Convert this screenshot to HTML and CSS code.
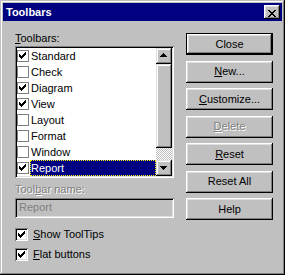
FILE: index.html
```html
<!DOCTYPE html>
<html>
<head>
<meta charset="utf-8">
<link rel="stylesheet" href="styles.css">
</head>
<body>
<div class="window">
  <div class="titlebar">
    <span class="title">Toolbars</span>
    <button class="title-close" aria-label="Close">
      <svg width="8" height="7" viewBox="0 0 8 7" shape-rendering="crispEdges"><path fill="#000" d="M0 0h2v1H0zM6 0h2v1H6zM1 1h2v1H1zM5 1h2v1H5zM2 2h4v1H2zM3 3h2v1H3zM2 4h4v1H2zM1 5h2v1H1zM5 5h2v1H5zM0 6h2v1H0zM6 6h2v1H6z"/></svg>
    </button>
  </div>
  <div class="body">
    <div class="left">
      <div class="label"><u>T</u>oolbars:</div>
      <div class="listbox">
        <ul class="items">
          <li class="item"><span class="cb-flat"><svg class="tick" width="7" height="7" viewBox="0 0 7 7" shape-rendering="crispEdges"><path d="M0 2h1v3H0zM1 3h1v3H1zM2 4h1v3H2zM3 3h1v3H3zM4 2h1v3H4zM5 1h1v3H5zM6 0h1v3H6z"/></svg></span><span class="item-text">Standard</span></li>
          <li class="item"><span class="cb-flat"></span><span class="item-text">Check</span></li>
          <li class="item"><span class="cb-flat"><svg class="tick" width="7" height="7" viewBox="0 0 7 7" shape-rendering="crispEdges"><path d="M0 2h1v3H0zM1 3h1v3H1zM2 4h1v3H2zM3 3h1v3H3zM4 2h1v3H4zM5 1h1v3H5zM6 0h1v3H6z"/></svg></span><span class="item-text">Diagram</span></li>
          <li class="item"><span class="cb-flat"><svg class="tick" width="7" height="7" viewBox="0 0 7 7" shape-rendering="crispEdges"><path d="M0 2h1v3H0zM1 3h1v3H1zM2 4h1v3H2zM3 3h1v3H3zM4 2h1v3H4zM5 1h1v3H5zM6 0h1v3H6z"/></svg></span><span class="item-text">View</span></li>
          <li class="item"><span class="cb-flat"></span><span class="item-text">Layout</span></li>
          <li class="item"><span class="cb-flat"></span><span class="item-text">Format</span></li>
          <li class="item"><span class="cb-flat"></span><span class="item-text">Window</span></li>
          <li class="item"><span class="cb-flat"><svg class="tick" width="7" height="7" viewBox="0 0 7 7" shape-rendering="crispEdges"><path d="M0 2h1v3H0zM1 3h1v3H1zM2 4h1v3H2zM3 3h1v3H3zM4 2h1v3H4zM5 1h1v3H5zM6 0h1v3H6z"/></svg></span><span class="item-text selected">Report</span></li>
        </ul>
        <div class="scrollbar">
          <div class="sb-btn sb-up"><svg width="7" height="4" viewBox="0 0 7 4" shape-rendering="crispEdges"><path d="M3 0h1v1H3zM2 1h3v1H2zM1 2h5v1H1zM0 3h7v1H0z"/></svg></div>
          <div class="sb-thumb"></div>
          <div class="sb-track"></div>
          <div class="sb-btn sb-down"><svg width="7" height="4" viewBox="0 0 7 4" shape-rendering="crispEdges"><path d="M0 0h7v1H0zM1 1h5v1H1zM2 2h3v1H2zM3 3h1v1H3z"/></svg></div>
        </div>
      </div>
      <div class="label label-name disabled">Tool<u>b</u>ar name:</div>
      <div class="edit">Report</div>
      <div class="checks">
        <div class="check"><span class="cb"><svg class="tick" width="7" height="7" viewBox="0 0 7 7" shape-rendering="crispEdges"><path d="M0 2h1v3H0zM1 3h1v3H1zM2 4h1v3H2zM3 3h1v3H3zM4 2h1v3H4zM5 1h1v3H5zM6 0h1v3H6z"/></svg></span><span><u>S</u>how ToolTips</span></div>
        <div class="check"><span class="cb"><svg class="tick" width="7" height="7" viewBox="0 0 7 7" shape-rendering="crispEdges"><path d="M0 2h1v3H0zM1 3h1v3H1zM2 4h1v3H2zM3 3h1v3H3zM4 2h1v3H4zM5 1h1v3H5zM6 0h1v3H6z"/></svg></span><span><u>F</u>lat buttons</span></div>
      </div>
    </div>
    <div class="buttons">
      <button class="btn btn-default">Close</button>
      <button class="btn"><u>N</u>ew...</button>
      <button class="btn"><u>C</u>ustomize...</button>
      <button class="btn disabled"><u>D</u>elete</button>
      <button class="btn"><u>R</u>eset</button>
      <button class="btn">Reset All</button>
      <button class="btn">Help</button>
    </div>
  </div>
</div>
</body>
</html>
```
FILE: styles.css
```css
* { box-sizing: border-box; }
html, body { margin: 0; padding: 0; }
body {
  font-family: "Liberation Sans", Arial, sans-serif;
  font-size: 11px;
  color: #000;
  background: #c0c0c0;
}
.window {
  width: 285px;
  height: 275px;
  padding: 3px;
  background: #c0c0c0;
  box-shadow: inset -1px -1px #000, inset 1px 1px #c0c0c0, inset -2px -2px #808080, inset 2px 2px #fff;
  display: flex;
  flex-direction: column;
}
.titlebar {
  height: 18px;
  background: #000080;
  display: flex;
  align-items: flex-start;
  justify-content: space-between;
  padding: 2px 2px 0 3px;
}
.title {
  color: #fff;
  font-weight: bold;
  line-height: 14px;
}
.title-close {
  width: 16px;
  height: 14px;
  border: 0;
  margin: 0;
  padding: 3px 0 0 4px;
  background: #c0c0c0;
  box-shadow: inset -1px -1px #000, inset 1px 1px #fff, inset -2px -2px #808080, inset 2px 2px #dfdfdf;
  display: block;
}
.title-close svg { display: block; }
.body {
  display: flex;
  gap: 12px;
  padding: 11px 0 0 12px;
}
.left {
  width: 159px;
  display: flex;
  flex-direction: column;
}
.label {
  line-height: 13px;
  height: 13px;
  white-space: nowrap;
}
.disabled {
  color: #808080;
  text-shadow: 1px 1px 0 #fff;
}
.listbox {
  margin-top: 1px;
  height: 132px;
  padding: 2px;
  background: #fff;
  box-shadow: inset 1px 1px #808080, inset -1px -1px #fff, inset 2px 2px #000, inset -2px -2px #dfdfdf;
  display: flex;
}
.items {
  list-style: none;
  margin: 0;
  padding: 0;
  width: 139px;
}
.item {
  height: 16px;
  display: flex;
  align-items: center;
}
.cb-flat {
  flex: none;
  width: 12px;
  height: 12px;
  border: 1px solid #808080;
  background: #fff;
}
.cb-flat .tick { display: block; margin: 1px 0 0 1px; }
.item-text {
  flex: 1;
  margin-left: 1px;
  height: 16px;
  border: 1px solid transparent;
  padding-top: 1px;
  line-height: 13px;
  white-space: nowrap;
}
.item-text.selected {
  background: #000080;
  color: #fff;
  border: 1px dotted #ffff00;
}
.scrollbar {
  width: 16px;
  display: flex;
  flex-direction: column;
}
.sb-btn, .sb-thumb {
  background: #c0c0c0;
  box-shadow: inset -1px -1px #000, inset 1px 1px #dfdfdf, inset -2px -2px #808080, inset 2px 2px #fff;
}
.sb-btn {
  height: 16px;
  padding-left: 4px;
}
.sb-btn svg { display: block; }
.sb-up { padding-top: 5px; }
.sb-down { padding-top: 6px; }
.sb-thumb { height: 84px; }
.sb-track {
  flex: 1;
  background-image: conic-gradient(#fff 25%, #c0c0c0 0 50%, #fff 0 75%, #c0c0c0 0);
  background-size: 2px 2px;
}
.label-name { margin-top: 5px; }
.edit {
  margin-top: 2px;
  height: 20px;
  padding: 2px 4px 0;
  line-height: 15px;
  color: #808080;
  background: #c0c0c0;
  box-shadow: inset 1px 1px #808080, inset -1px -1px #fff, inset 2px 2px #000, inset -2px -2px #dfdfdf;
}
.checks {
  margin-top: 10px;
  display: flex;
  flex-direction: column;
  gap: 7px;
}
.check {
  display: flex;
  align-items: center;
  gap: 5px;
  height: 13px;
  line-height: 13px;
  white-space: nowrap;
}
.cb {
  flex: none;
  width: 13px;
  height: 13px;
  padding: 3px;
  background: #fff;
  box-shadow: inset 1px 1px #808080, inset -1px -1px #fff, inset 2px 2px #000, inset -2px -2px #dfdfdf;
}
.cb .tick { display: block; }
.buttons {
  width: 87px;
  display: flex;
  flex-direction: column;
  gap: 5.5px;
  padding-top: 1px;
}
.btn {
  width: 87px;
  height: 22px;
  margin: 0;
  padding: 0;
  border: 0;
  font: inherit;
  line-height: 13px;
  color: #000;
  background: #c0c0c0;
  box-shadow: inset -1px -1px #000, inset 1px 1px #fff, inset -2px -2px #808080, inset 2px 2px #dfdfdf;
}
.btn-default { border: 1px solid #000; }
.btn.disabled { color: #808080; text-shadow: 1px 1px 0 #fff; }
```
